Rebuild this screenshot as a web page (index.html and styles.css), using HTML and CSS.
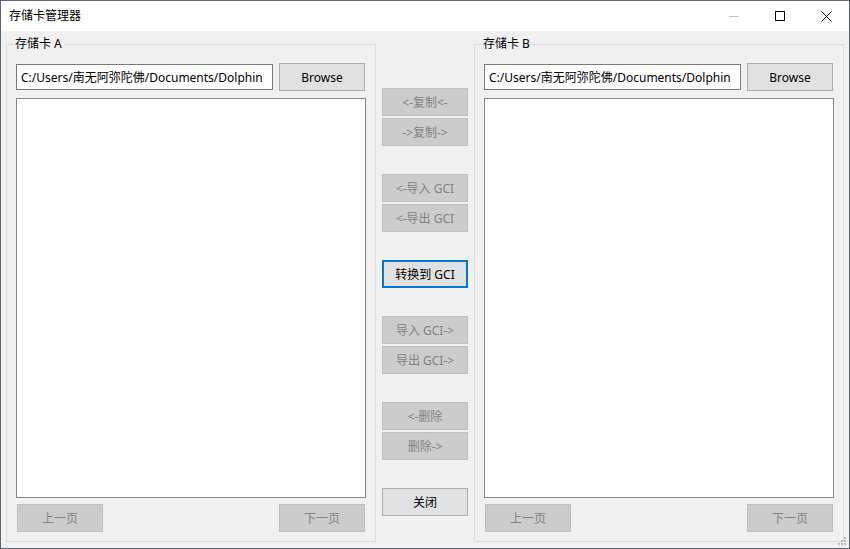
FILE: index.html
```html
<!DOCTYPE html>
<html lang="zh-CN">
<head>
    <meta charset="UTF-8">
    <title>存储卡管理器</title>
    <link rel="stylesheet" href="styles.css">
</head>
<body>
    <div class="window">
        <!-- Title bar -->
        <div class="titlebar">
            <span class="title">存储卡管理器</span>
            <div class="controls">
                <span class="ctl">
                    <svg width="10" height="10" viewBox="0 0 10 10"><line x1="0" y1="5.5" x2="10" y2="5.5" stroke="#c4c4c4" stroke-width="1"/></svg>
                </span>
                <span class="ctl">
                    <svg width="10" height="10" viewBox="0 0 10 10"><rect x="0.5" y="0.5" width="9" height="9" fill="none" stroke="#000" stroke-width="1"/></svg>
                </span>
                <span class="ctl">
                    <svg width="11" height="11" viewBox="0 0 11 11"><path d="M0.5 0.5 L10.5 10.5 M10.5 0.5 L0.5 10.5" stroke="#000" stroke-width="1" fill="none"/></svg>
                </span>
            </div>
        </div>

        <div class="content">
            <!-- Card A -->
            <fieldset class="card">
                <legend>存储卡 A</legend>
                <div class="path-row">
                    <input class="path" type="text" value="C:/Users/南无阿弥陀佛/Documents/Dolphin" readonly>
                    <button class="btn">Browse</button>
                </div>
                <div class="list"></div>
                <div class="page-row">
                    <button class="btn" disabled>上一页</button>
                    <button class="btn" disabled>下一页</button>
                </div>
            </fieldset>

            <!-- Middle actions -->
            <div class="actions">
                <div class="pair">
                    <button class="btn" disabled>&lt;-复制&lt;-</button>
                    <button class="btn" disabled>-&gt;复制-&gt;</button>
                </div>
                <div class="pair">
                    <button class="btn" disabled>&lt;-导入 GCI</button>
                    <button class="btn" disabled>&lt;-导出 GCI</button>
                </div>
                <button class="btn btn-default">转换到 GCI</button>
                <div class="pair">
                    <button class="btn" disabled>导入 GCI-&gt;</button>
                    <button class="btn" disabled>导出 GCI-&gt;</button>
                </div>
                <div class="pair">
                    <button class="btn" disabled>&lt;-删除</button>
                    <button class="btn" disabled>删除-&gt;</button>
                </div>
                <button class="btn">关闭</button>
            </div>

            <!-- Card B -->
            <fieldset class="card">
                <legend>存储卡 B</legend>
                <div class="path-row">
                    <input class="path" type="text" value="C:/Users/南无阿弥陀佛/Documents/Dolphin" readonly>
                    <button class="btn">Browse</button>
                </div>
                <div class="list"></div>
                <div class="page-row">
                    <button class="btn" disabled>上一页</button>
                    <button class="btn" disabled>下一页</button>
                </div>
            </fieldset>
        </div>

        <!-- Size grip -->
        <svg class="grip" width="9" height="9" viewBox="0 0 9 9">
            <rect x="6" y="0" width="2" height="2" fill="#b8b8b8"/>
            <rect x="3" y="3" width="2" height="2" fill="#b8b8b8"/>
            <rect x="6" y="3" width="2" height="2" fill="#b8b8b8"/>
            <rect x="0" y="6" width="2" height="2" fill="#b8b8b8"/>
            <rect x="3" y="6" width="2" height="2" fill="#b8b8b8"/>
            <rect x="6" y="6" width="2" height="2" fill="#b8b8b8"/>
        </svg>
    </div>
</body>
</html>
```

FILE: styles.css
```css
body {
    margin: 0;
    font-family: 'Noto Sans', 'Noto Sans CJK SC', sans-serif;
    font-size: 12px;
    color: #000;
}
.window {
    width: 850px;
    height: 549px;
    box-sizing: border-box;
    border: 1px solid #5b6573;
    background-color: #f0f0f0;
    display: flex;
    flex-direction: column;
    position: relative;
}
/* Title bar */
.titlebar {
    height: 30px;
    background-color: #fff;
    display: flex;
    align-items: center;
    justify-content: space-between;
}
.title {
    padding-left: 8px;
    line-height: 16px;
}
.controls {
    display: flex;
    height: 100%;
}
.ctl {
    width: 46px;
    height: 100%;
    display: flex;
    align-items: center;
    justify-content: center;
}
.ctl svg {
    display: block;
}
/* Main area */
.content {
    flex: 1;
    display: flex;
    padding: 5px 5px 6px;
    min-height: 0;
}
.card {
    width: 370px;
    box-sizing: border-box;
    margin: 0;
    padding: 0 9px 9px;
    border: 1px solid #dcdcdc;
    min-width: 0;
    display: flex;
    flex-direction: column;
}
.card legend {
    font-size: 12px;
    line-height: 16px;
    padding: 0 2px;
    margin-left: -3px;
}
.path-row {
    margin-top: 11px;
    display: flex;
    align-items: center;
    gap: 6px;
    padding-right: 1px;
}
.path {
    width: 257px;
    height: 26px;
    box-sizing: border-box;
    margin: 0;
    border: 1px solid #7a7a7a;
    padding: 0 4px;
    background-color: #fff;
    font-family: inherit;
    font-size: 12px;
    color: #000;
    outline: none;
}
.list {
    flex: 1;
    margin-top: 7px;
    border: 1px solid #828790;
    background-color: #fff;
}
.page-row {
    margin-top: 6px;
    display: flex;
    justify-content: space-between;
    padding: 0 1px;
}
/* Buttons */
.btn {
    width: 86px;
    height: 28px;
    box-sizing: border-box;
    margin: 0;
    padding: 0;
    border: 1px solid #adadad;
    background-color: #e1e1e1;
    font-family: inherit;
    font-size: 12px;
    color: #000;
}
.btn:disabled {
    background-color: #cccccc;
    border-color: #bfbfbf;
    color: #838383;
}
.btn-default {
    border: 2px solid #0078d7;
}
.actions {
    width: 98px;
    display: flex;
    flex-direction: column;
    align-items: center;
    gap: 28px;
    padding-top: 52px;
}
.pair {
    display: flex;
    flex-direction: column;
    gap: 2px;
}
.grip {
    position: absolute;
    right: 2px;
    bottom: 2px;
}
```
